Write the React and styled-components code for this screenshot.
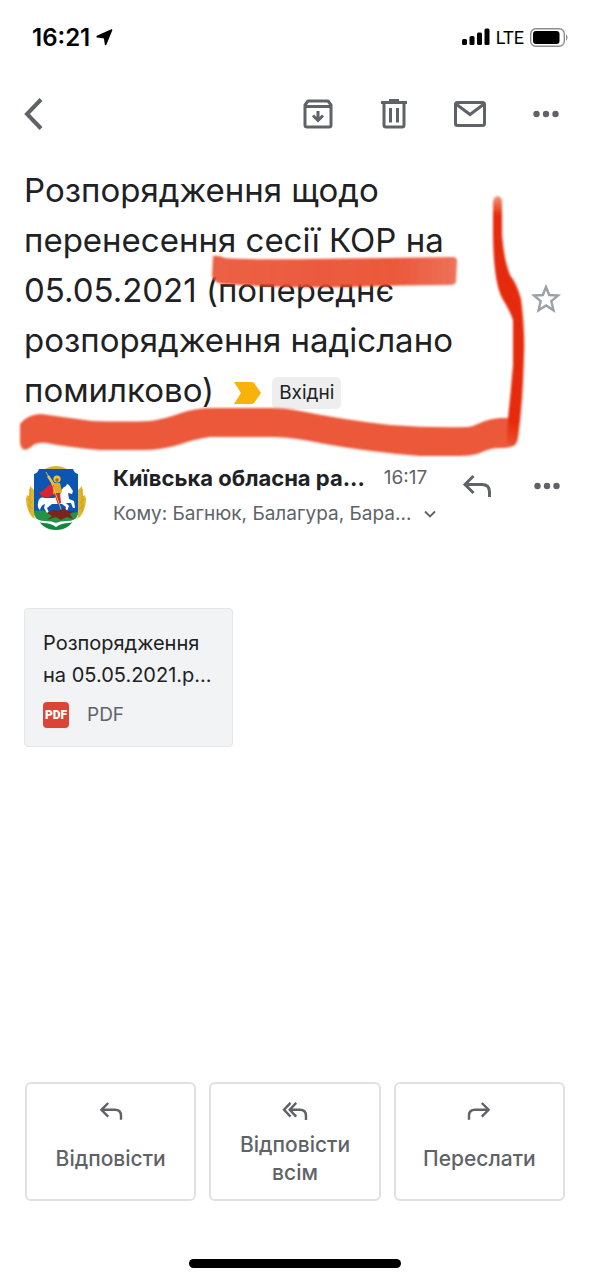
import React from 'react';
import styled, { createGlobalStyle, css } from 'styled-components';

const colors = {
  text: '#202124',
  muted: '#5f6368',
  border: '#dadce0',
  surface: '#f1f3f4',
  marker: '#ea4f30',
  markerDark: '#e52a07',
};

const App = () => (
  <Screen>
    <GlobalStyle />
    <StatusBar>
      <Clock>
        16:21
        <LocationIcon />
      </Clock>
      <Signals>
        <SignalIcon />
        <Network>LTE</Network>
        <BatteryIcon />
      </Signals>
    </StatusBar>

    <Toolbar>
      <IconButton aria-label="Назад">
        <BackIcon />
      </IconButton>
      <ToolbarActions>
        <IconButton aria-label="Архівувати">
          <ArchiveIcon />
        </IconButton>
        <IconButton aria-label="Видалити">
          <TrashIcon />
        </IconButton>
        <IconButton aria-label="Позначити як непрочитане">
          <MailIcon />
        </IconButton>
        <IconButton aria-label="Більше">
          <DotsIcon />
        </IconButton>
      </ToolbarActions>
    </Toolbar>

    <SubjectRow>
      <Subject>
        Розпорядження щодо перенесення сесії КОР на 05.05.2021 (попереднє
        розпорядження надіслано помилково)
        <ImportantIcon />
        <Label>Вхідні</Label>
      </Subject>
      <IconButton aria-label="Додати зірочку">
        <StarIcon />
      </IconButton>
      <Annotation />
    </SubjectRow>

    <MessageHeader>
      <Avatar />
      <Meta>
        <SenderLine>
          <Sender>Київська обласна ра...</Sender>
          <Time>16:17</Time>
        </SenderLine>
        <Recipients>
          Кому: Багнюк, Балагура, Бара...
          <ChevronIcon />
        </Recipients>
      </Meta>
      <MessageActions>
        <IconButton aria-label="Відповісти">
          <ReplyIcon width={30} height={24} />
        </IconButton>
        <IconButton aria-label="Більше">
          <DotsIcon />
        </IconButton>
      </MessageActions>
    </MessageHeader>

    <Attachment href="#attachment">
      <FileName>
        Розпорядження
        <br />
        на 05.05.2021.р...
      </FileName>
      <FileType>
        <PdfBadge>PDF</PdfBadge>
        PDF
      </FileType>
    </Attachment>

    <ReplyBar>
      <ReplyButton>
        <ReplyIcon width={24} height={20} />
        <ReplyLabel>Відповісти</ReplyLabel>
      </ReplyButton>
      <ReplyButton>
        <ReplyAllIcon />
        <ReplyLabel>Відповісти всім</ReplyLabel>
      </ReplyButton>
      <ReplyButton>
        <ReplyIcon width={24} height={20} flip />
        <ReplyLabel>Переслати</ReplyLabel>
      </ReplyButton>
    </ReplyBar>
    <HomeIndicator />
  </Screen>
);

export default App;

const LocationIcon = () => (
  <svg width="17" height="17" viewBox="0 0 17 17" aria-hidden="true">
    <path
      d="M15.6 1 L9.6 15.4 L8.6 8.6 L1.2 7.6 Z"
      fill="#000"
      stroke="#000"
      strokeWidth="1.6"
      strokeLinejoin="round"
    />
  </svg>
);

const SignalIcon = () => (
  <svg width="28" height="18" viewBox="0 0 28 18" aria-hidden="true">
    <rect x="0" y="11" width="5" height="6" rx="1.5" />
    <rect x="7.5" y="8" width="5" height="9" rx="1.5" />
    <rect x="15" y="4.5" width="5" height="12.5" rx="1.5" />
    <rect x="22.5" y="0.5" width="5" height="16.5" rx="1.5" />
  </svg>
);

const BatteryIcon = () => (
  <svg width="38" height="19" viewBox="0 0 38 19" aria-hidden="true">
    <rect x="0.7" y="0.7" width="33.6" height="17.6" rx="5" fill="none" stroke="#8e8e8e" strokeWidth="1.4" />
    <rect x="3" y="3" width="26.5" height="13" rx="3" />
    <path d="M36 6.5 C38 7.5 38 11.5 36 12.5 Z" fill="#8e8e8e" />
  </svg>
);

const BackIcon = () => (
  <svg width="20" height="34" viewBox="0 0 20 34" aria-hidden="true">
    <path d="M17 2.5 L3 17 L17 31.5" fill="none" stroke="currentColor" strokeWidth="4" />
  </svg>
);

const ArchiveIcon = () => (
  <svg width="32" height="32" viewBox="0 0 32 32" fill="none" stroke="currentColor" aria-hidden="true">
    <path
      d="M6 3 H26 L29 7 V27 Q29 29 27 29 H5 Q3 29 3 27 V7 Z"
      strokeWidth="3"
      strokeLinejoin="round"
    />
    <path d="M3 8.5 H29" strokeWidth="3" />
    <path d="M16 13 V21 M11 17.5 L16 22.5 L21 17.5" strokeWidth="3" />
  </svg>
);

const TrashIcon = () => (
  <svg width="32" height="32" viewBox="0 0 32 32" fill="none" stroke="currentColor" aria-hidden="true">
    <path d="M3 4.5 H29" strokeWidth="3" />
    <path d="M11 2.5 H21" strokeWidth="3" />
    <path d="M6 4.5 V27 Q6 29 8 29 H24 Q26 29 26 27 V4.5" strokeWidth="3" />
    <path d="M12.5 10 V24.5 M19.5 10 V24.5" strokeWidth="3" />
  </svg>
);

const MailIcon = () => (
  <svg width="34" height="28" viewBox="0 0 34 28" fill="none" stroke="currentColor" aria-hidden="true">
    <rect x="2.5" y="2.5" width="29" height="23" rx="2" strokeWidth="3" />
    <path d="M3 4 L17 14.5 L31 4" strokeWidth="3" />
  </svg>
);

const DotsIcon = () => (
  <svg width="28" height="8" viewBox="0 0 28 8" fill="currentColor" aria-hidden="true">
    <circle cx="4.5" cy="4" r="3.2" />
    <circle cx="14" cy="4" r="3.2" />
    <circle cx="23.5" cy="4" r="3.2" />
  </svg>
);

const StarIcon = () => (
  <svg width="32" height="32" viewBox="0 0 32 32" aria-hidden="true">
    <path
      d="M16 4 L19.2 12 L28 12.6 L21.3 18.2 L23.5 27.3 L16 22.4 L8.5 27.3 L10.7 18.2 L4 12.6 L12.8 12 Z"
      fill="none"
      stroke="#9aa0a6"
      strokeWidth="2.4"
    />
  </svg>
);

const ChevronIcon = () => (
  <svg width="12" height="8" viewBox="0 0 12 8" aria-hidden="true">
    <path d="M1 1.5 L6 6.5 L11 1.5" fill="none" stroke="currentColor" strokeWidth="1.8" />
  </svg>
);

const ReplyIcon = ({ width, height, flip }) => (
  <svg
    width={width}
    height={height}
    viewBox="0 0 30 24"
    fill="none"
    stroke="currentColor"
    strokeWidth="3"
    aria-hidden="true"
  >
    <g transform={flip ? 'translate(30 0) scale(-1 1)' : undefined}>
      <path d="M11.5 2 L3 10.5 L11.5 19" />
      <path d="M3 10.5 H20 Q27.5 10.5 27.5 18 V23" />
    </g>
  </svg>
);

const ReplyAllIcon = () => (
  <svg width="26" height="20" viewBox="0 0 32 24" fill="none" stroke="currentColor" strokeWidth="3" aria-hidden="true">
    <path d="M10.5 2 L2.5 10.5 L10.5 19" />
    <path d="M17.5 2 L9.5 10.5 L17.5 19" />
    <path d="M9.5 10.5 H22 Q29.5 10.5 29.5 18 V23" />
  </svg>
);

const Important = styled.svg`
  margin-left: 20px;
  vertical-align: -2px;
`;

const ImportantIcon = () => (
  <Important width="27" height="22" viewBox="0 0 27 22" aria-hidden="true">
    <path d="M0 0 H18 Q19 0 20 1 L27 11 L20 21 Q19 22 18 22 H0 L7 11 Z" fill="#f9b208" />
  </Important>
);

// Coat of arms: rider on a blue shield between ears of wheat
const Avatar = () => (
  <svg width="60" height="64" viewBox="0 0 60 64" role="img" aria-label="Київська обласна рада">
    <defs>
      <clipPath id="shield">
        <path d="M13 3 H47 Q48 7 52 8 V45 Q52 54 43 57 Q35 58 30 62 Q25 58 17 57 Q8 54 8 45 V8 Q12 7 13 3 Z" />
      </clipPath>
    </defs>
    <path d="M19 3 Q30 -3 41 3 Z" fill="#d8b42c" />
    <path d="M4 20 L8 24 V50 L14 56 L6 51 Q0 43 0 33 L1 29 L3 30 Z" fill="#e0b62f" />
    <path d="M56 20 L52 24 V50 L46 56 L54 51 Q60 43 60 33 L59 29 L57 30 Z" fill="#e0b62f" />
    <path d="M4 23 V46 M2 33 L6 37 M2 39 L7 43 M56 23 V46 M58 33 L54 37 M58 39 L53 43" stroke="#c9a024" fill="none" />
    <path d="M10 50 Q16 64 30 64 Q44 64 50 50 Z" fill="#16863c" />
    <g clipPath="url(#shield)">
      <rect width="60" height="64" fill="#0b56b3" />
      <path d="M0 46 Q15 43 30 46 T60 44 V64 H0 Z" fill="#219447" />
      {/* horse */}
      <path
        d="M19 32 Q13 30 12 37 Q11 42 14 44 Q15 39 19 38 L18 42 L21 47 L23 47 L21 42 L26 38 L36 38 L40 41 L39 45 L41 45 L43 40 L40 37 L45 37 L47 42 L49 42 L48 35 L43 33 L42 27 L46 28 L47 25 L43 19 L41 18 L40 20 Q35 22 34 29 L28 32 Z"
        fill="#fff"
      />
      {/* cloak */}
      <path d="M28 17 Q22 19 20 22 Q17 26 13 26 Q16 33 23 31 Q28 29 29 24 Z" fill="#dc2430" />
      <path d="M28 17 H34 L36 26 L32 30 L27 28 Z" fill="#e2a92a" />
      <path d="M28 27 L34 27 L35 37 L32 39 Z" fill="#c4341f" />
      <path d="M28 19 L22 10" stroke="#e8b838" strokeWidth="2.5" />
      <path d="M20 6 L25 15 L36 46" stroke="#efcd70" strokeWidth="0.8" fill="none" />
      <circle cx="31" cy="13" r="3.6" fill="#f4c72d" />
      <circle cx="31" cy="14" r="1.8" fill="#a06636" />
      {/* serpent */}
      <path
        d="M21 47 Q26 42 32 45 L38 42 L42 45 L49 45 L44 48 L47 53 L41 51 L35 54 L30 51 L21 54 L26 50 Z"
        fill="#7d241b"
      />
    </g>
    <path
      d="M8 50 Q9 56 17 57 Q25 57 30 61 Q35 57 43 57 Q51 56 52 50 Q49 55 41 55 Q34 55 30 57 Q26 55 19 55 Q11 55 8 50 Z"
      fill="#fff"
    />
  </svg>
);

const AnnotationLayer = styled.svg`
  position: absolute;
  top: 0;
  left: 0;
  pointer-events: none;
`;

// Hand drawn marker strokes over the subject
const Annotation = () => (
  <AnnotationLayer width="590" height="310" viewBox="0 154 590 310" aria-hidden="true">
    <defs>
      <filter id="soft" x="-5%" y="-10%" width="110%" height="120%">
        <feGaussianBlur stdDeviation="0.8" />
      </filter>
      <linearGradient id="fade" x1="0" x2="1" y1="0" y2="0">
        <stop offset="0" stopColor={colors.marker} stopOpacity="0.9" />
        <stop offset="0.75" stopColor={colors.marker} stopOpacity="0.95" />
        <stop offset="1" stopColor={colors.marker} stopOpacity="0.8" />
      </linearGradient>
      <linearGradient id="tip" x1="0" x2="0" y1="0" y2="1">
        <stop offset="0" stopColor={colors.markerDark} stopOpacity="0.5" />
        <stop offset="0.08" stopColor={colors.markerDark} />
        <stop offset="0.9" stopColor={colors.markerDark} />
        <stop offset="1" stopColor={colors.marker} />
      </linearGradient>
    </defs>
    <g filter="url(#soft)">
      <path
        d="M213 256 Q218 255 225 258 Q245 260 310 259 Q390 258 453 257 Q457 257 457 261 L456 282 Q455 285 450 285 Q400 285 350 287 Q280 288 222 284 Q213 282 212 276 Z"
        fill="url(#fade)"
      />
      <path
        d="M20 424 Q28 414 41 414 Q62 417 92 421 Q125 422 150 421 Q165 419 181 413 Q196 408 213 408 H270 Q286 408 300 411 Q345 420 390 425 Q430 428 468 427 Q474 426 480 423 Q488 419 500 418 H516 V444 Q512 448 500 448 Q490 448 480 453 Q472 456 460 456 H420 Q370 452 325 444 Q298 438 275 437 H210 Q195 439 178 445 Q160 450 145 450 H100 Q65 447 47 443 Q36 442 31 447 Q22 454 20 443 Z"
        fill={colors.marker}
        fillOpacity="0.95"
      />
      <path
        d="M493 202 Q494 196 498 196 Q502 197 502 202 V235 Q504 260 510 275 Q517 284 521 299 Q525 330 524 355 Q523 400 518 438 Q517 444 513 446 Q506 446 507 437 L508 418 Q511 390 513 365 V320 Q510 311 502 298 Q493 280 493 230 Z"
        fill="url(#tip)"
      />
    </g>
  </AnnotationLayer>
);

const GlobalStyle = createGlobalStyle`
  * {
    box-sizing: border-box;
  }

  body {
    margin: 0;
    background: #fff;
    color: ${colors.text};
    font-family: Inter, 'Noto Sans', sans-serif;
  }

  svg {
    flex-shrink: 0;
  }
`;

const row = css`
  display: flex;
  align-items: center;
`;

const Screen = styled.main`
  display: flex;
  flex-direction: column;
  min-height: 100vh;
`;

const StatusBar = styled.header`
  ${row}
  justify-content: space-between;
  height: 74px;
  padding: 0 22px 0 32px;
`;

const Clock = styled.div`
  ${row}
  gap: 6px;
  color: #000;
  font-size: 24px;
  font-weight: 600;
`;

const Signals = styled.div`
  ${row}
  gap: 6px;
  color: #000;
`;

const Network = styled.span`
  font-family: Roboto, sans-serif;
  font-size: 18px;
`;

const Toolbar = styled.nav`
  ${row}
  justify-content: space-between;
  height: 80px;
  padding: 0 24px;
`;

const ToolbarActions = styled.div`
  display: grid;
  grid-template-columns: repeat(4, 36px);
  column-gap: 40px;
  margin-right: 2px;
`;

const IconButton = styled.button`
  display: flex;
  align-items: center;
  justify-content: center;
  padding: 0;
  border: 0;
  background: none;
  color: ${colors.muted};
  cursor: pointer;
`;

const SubjectRow = styled.section`
  ${row}
  position: relative;
  justify-content: space-between;
  padding: 11px 28px 0 24px;
`;

const Subject = styled.h1`
  flex: 1;
  max-width: 460px;
  margin: 0;
  padding-bottom: 18px;
  font-size: 33px;
  font-weight: 400;
  line-height: 50px;
`;

const Label = styled.span`
  display: inline-block;
  margin-left: 11px;
  padding: 0 7px;
  border-radius: 5px;
  background: #eee;
  font-size: 19px;
  line-height: 32px;
  vertical-align: 3px;
`;

const MessageHeader = styled.section`
  display: flex;
  padding: 33px 29px 0 26px;
`;

const Meta = styled.div`
  flex: 1;
  min-width: 0;
  padding-left: 27px;
`;

const SenderLine = styled.div`
  ${row}
  gap: 19px;
  line-height: 24px;
  white-space: nowrap;
`;

const Sender = styled.strong`
  font-size: 22px;
  font-weight: 700;
`;

const Time = styled.time`
  color: ${colors.muted};
  font-size: 19px;
`;

const Recipients = styled.div`
  ${row}
  gap: 13px;
  margin-top: 12px;
  color: ${colors.muted};
  font-size: 19px;
  line-height: 24px;
  white-space: nowrap;
`;

const MessageActions = styled.div`
  ${row}
  gap: 41px;
  height: 40px;
`;

const Attachment = styled.a`
  display: block;
  width: 209px;
  margin: 78px 24px 0;
  padding: 18px;
  border: 1px solid #e4e6e9;
  border-radius: 4px;
  background: ${colors.surface};
  color: ${colors.text};
  text-decoration: none;
`;

const FileName = styled.div`
  font-size: 20px;
  line-height: 32px;
  white-space: nowrap;
`;

const FileType = styled.div`
  ${row}
  gap: 18px;
  margin-top: 11px;
  color: ${colors.muted};
  font-size: 19px;
  line-height: 26px;
`;

const PdfBadge = styled.span`
  width: 26px;
  height: 26px;
  border-radius: 4px;
  background: #db4437;
  color: #fff;
  font-family: Roboto, sans-serif;
  font-size: 12px;
  font-weight: 900;
  text-align: center;
`;

const ReplyBar = styled.footer`
  display: grid;
  grid-template-columns: repeat(3, 1fr);
  gap: 13px;
  margin-top: auto;
  padding: 48px 25px 58px;
`;

const ReplyButton = styled.button`
  display: flex;
  flex-direction: column;
  align-items: center;
  height: 119px;
  padding: 17px 20px 3px;
  border: 2px solid #e0e1e4;
  border-radius: 6px;
  background: #fff;
  color: ${colors.muted};
  font-family: inherit;
  font-size: 21px;
  font-weight: 500;
  line-height: 28px;
  cursor: pointer;
`;

const ReplyLabel = styled.span`
  display: flex;
  align-items: center;
  flex: 1;
`;

const HomeIndicator = styled.div`
  align-self: center;
  width: 36%;
  height: 9px;
  margin-bottom: 12px;
  border-radius: 5px;
  background: #000;
`;
